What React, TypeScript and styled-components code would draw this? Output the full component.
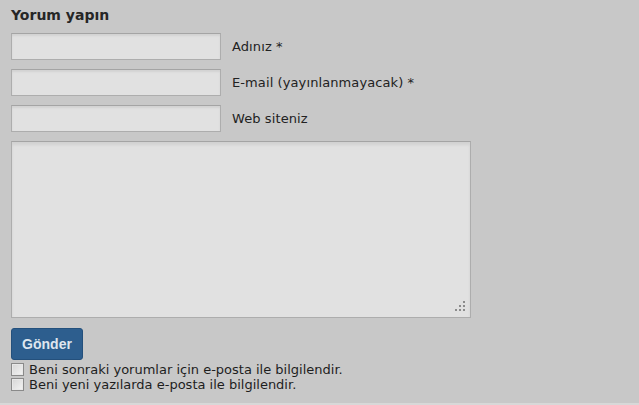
import React from "react";
import styled, { createGlobalStyle } from "styled-components";

const GlobalStyle = createGlobalStyle`
  html, body {
    margin: 0;
    padding: 0;
    background: #c8c8c8;
  }
  body {
    font-family: "DejaVu Sans", Verdana, sans-serif;
    color: #222;
  }
`;

const Form = styled.form`
  width: 639px;
  height: 405px;
  box-sizing: border-box;
  padding: 6px 11px 0 11px;
  background: #c8c8c8;
  border-bottom: 2px solid #d8d8d8;
`;

const Title = styled.h3`
  margin: 0 0 8px 0;
  font-size: 14px;
  font-weight: bold;
  line-height: 19px;
  color: #262626;
`;

const FieldRow = styled.div`
  display: flex;
  align-items: center;
  gap: 11px;
  margin-bottom: 9px;
`;

const TextInput = styled.input`
  box-sizing: border-box;
  width: 210px;
  height: 27px;
  margin: 0;
  border: 1px solid #adadad;
  border-top-color: #a4a4a4;
  background: #e1e1e1;
  box-shadow: inset 0 2px 2px #d2d2d2;
  outline: none;
  padding: 0 4px;
`;

const Label = styled.label`
  font-size: 13px;
  color: #222;
  letter-spacing: 0.1px;
`;

const AreaWrap = styled.div`
  position: relative;
  width: 460px;
  height: 177px;
  margin-bottom: 10px;
`;

const Area = styled.textarea`
  box-sizing: border-box;
  display: block;
  width: 460px;
  height: 177px;
  margin: 0;
  border: 1px solid #adadad;
  border-top-color: #a4a4a4;
  background: #e1e1e1;
  box-shadow: inset 0 3px 3px #d2d2d2;
  outline: none;
  resize: none;
`;

const Grip = styled.svg`
  position: absolute;
  right: 5px;
  bottom: 5px;
`;

const Button = styled.button`
  box-sizing: border-box;
  width: 72px;
  height: 32px;
  margin: 0 0 2px 0;
  padding: 0;
  border: 1px solid #24507c;
  border-radius: 3px;
  background: #2d5e8e;
  color: #dfe6ee;
  font-family: "Liberation Sans", Arial, sans-serif;
  font-size: 14px;
  font-weight: bold;
  cursor: pointer;
`;

const CheckRow = styled.label`
  display: flex;
  align-items: center;
  gap: 5px;
  height: 15px;
  font-size: 13px;
  color: #1e1e1e;
`;

const Box = styled.span`
  box-sizing: border-box;
  width: 13px;
  height: 13px;
  border: 1px solid #8a8a8a;
  background: linear-gradient(135deg, #d6d6d6, #f4f4f4);
  box-shadow: inset 0 0 0 1px #e8e8e8;
  flex: none;
`;

const fields = [
  { id: "author", label: "Adınız *" },
  { id: "email", label: "E-mail (yayınlanmayacak) *" },
  { id: "url", label: "Web siteniz" },
];

const checks = [
  "Beni sonraki yorumlar için e-posta ile bilgilendir.",
  "Beni yeni yazılarda e-posta ile bilgilendir.",
];

export default function App() {
  return (
    <>
      <GlobalStyle />
      <Form onSubmit={(e) => e.preventDefault()}>
        <Title>Yorum yapın</Title>
        {fields.map((f) => (
          <FieldRow key={f.id}>
            <TextInput id={f.id} type="text" />
            <Label htmlFor={f.id}>{f.label}</Label>
          </FieldRow>
        ))}
        <AreaWrap>
          <Area />
          <Grip width="12" height="12" viewBox="0 0 12 12">
            <g fill="#8c8c8c">
              <rect x="9" y="0" width="2" height="2" />
              <rect x="5" y="4" width="2" height="2" />
              <rect x="9" y="4" width="2" height="2" />
              <rect x="1" y="8" width="2" height="2" />
              <rect x="5" y="8" width="2" height="2" />
              <rect x="9" y="8" width="2" height="2" />
            </g>
          </Grip>
        </AreaWrap>
        <Button type="submit">Gönder</Button>
        {checks.map((c) => (
          <CheckRow key={c}>
            <Box />
            {c}
          </CheckRow>
        ))}
      </Form>
    </>
  );
}
